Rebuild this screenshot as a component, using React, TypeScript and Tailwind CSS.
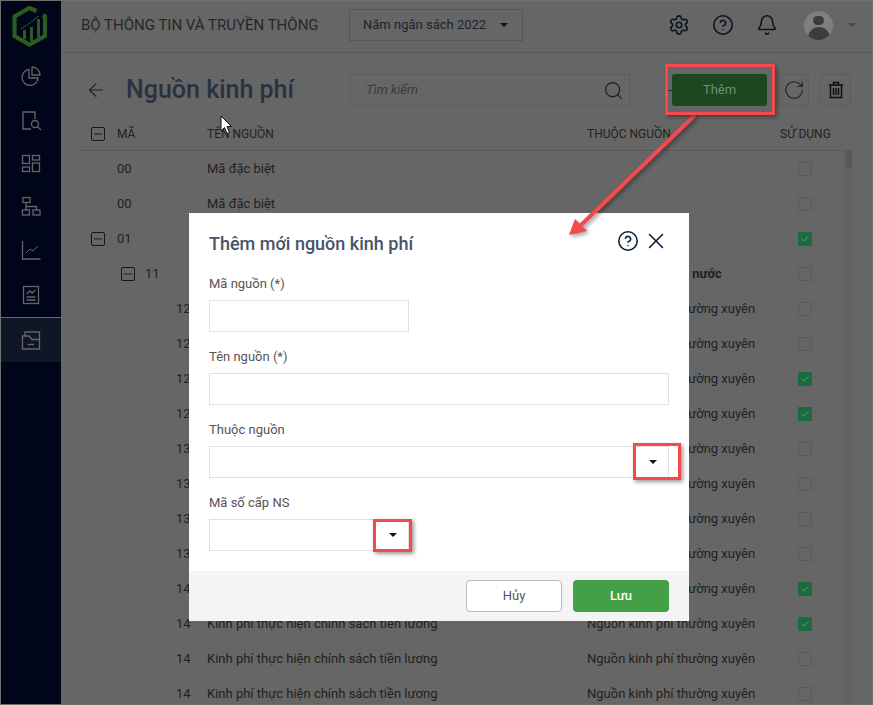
import { Bell, CircleHelp, RotateCw, Search, Settings, X, ArrowLeft, Check } from "lucide-react";

const rows = [
  { ma: "00", level: 0, ten: "Mã đặc biệt", nguon: "", checked: false },
  { ma: "00", level: 0, ten: "Mã đặc biệt", nguon: "", checked: false },
  { ma: "01", level: 0, ten: "", nguon: "", checked: true, tree: true },
  { ma: "11", level: 1, ten: "", nguon: "Ngân sách trong nước", checked: false, tree: true, bold: true },
  { ma: "12", level: 2, ten: "", checked: false },
  { ma: "12", level: 2, ten: "", checked: false },
  { ma: "12", level: 2, ten: "", checked: true },
  { ma: "12", level: 2, ten: "", checked: true },
  { ma: "13", level: 2, ten: "", checked: false },
  { ma: "13", level: 2, ten: "", checked: false },
  { ma: "13", level: 2, ten: "", checked: false },
  { ma: "13", level: 2, ten: "", checked: false },
  { ma: "14", level: 2, ten: "", checked: true },
  { ma: "14", level: 2, checked: true },
  { ma: "14", level: 2, checked: false },
  { ma: "14", level: 2, checked: false },
];

function TreeBox({ className = "" }: { className?: string }) {
  return (
    <div className={`w-[14px] h-[14px] border border-[#14161c] rounded-[2px] flex items-center justify-center ${className}`}>
      <div className="w-[8px] h-[2px] bg-[#3c3f46]"></div>
    </div>
  );
}

function Logo() {
  return (
    <svg width="36" height="41" viewBox="0 0 36 41" fill="none" className="mr-[2px]">
      <path d="M24.5 5 L17.5 2 L2.5 10.5 V30 L17.5 38.5 L33 30 V10.5 L31 9" stroke="#2a5c20" strokeWidth="4.2" />
      <rect x="11" y="24" width="3" height="9" fill="#2a5c20" />
      <rect x="18" y="21" width="3" height="14" fill="#2a5c20" />
      <rect x="25" y="13" width="3" height="20" fill="#2a5c20" />
      <path d="M9 23 L18 17 L27 10" stroke="#2a5c20" strokeWidth="1" />
    </svg>
  );
}

function NavIcon({ children }: { children: React.ReactNode }) {
  return (
    <svg width="22" height="22" viewBox="0 0 22 22" fill="none" stroke="#666666" strokeWidth="1.3">
      {children}
    </svg>
  );
}

function Sidebar() {
  return (
    <aside className="w-[61px] shrink-0 bg-[#00051a] flex flex-col items-center">
      <div className="h-[53px] flex items-center justify-center">
        <Logo />
      </div>
      <div className="flex flex-col items-center w-full mt-[12px]">
        <div className="h-[22px] flex items-center">
          <NavIcon>
            <path d="M9 4.5 A8 8 0 1 0 18 13 H9 Z" />
            <path d="M12 2 A8 8 0 0 1 20 10 H12 Z" />
          </NavIcon>
        </div>
        <div className="h-[22px] mt-[23px] flex items-center">
          <NavIcon>
            <path d="M11 19 H3 V2 H15 V9" />
            <circle cx="15" cy="14" r="3.5" />
            <path d="M17.5 16.5 L21 20" />
          </NavIcon>
        </div>
        <div className="h-[22px] mt-[21px] flex items-center">
          <NavIcon>
            <rect x="2.5" y="2.5" width="7" height="8" />
            <rect x="2.5" y="14" width="7" height="4.5" />
            <rect x="12.5" y="2.5" width="7" height="4.5" />
            <rect x="12.5" y="10" width="7" height="8.5" />
          </NavIcon>
        </div>
        <div className="h-[22px] mt-[21px] flex items-center">
          <NavIcon>
            <rect x="3" y="1.5" width="7" height="5" />
            <rect x="2.5" y="14" width="7" height="5" />
            <rect x="13" y="14" width="7" height="5" />
            <path d="M6 6.5 V14 M6 10.5 H16.5 V14" />
          </NavIcon>
        </div>
        <div className="h-[22px] mt-[21px] flex items-center">
          <NavIcon>
            <path d="M2.5 2 V20 H20.5" />
            <path d="M6 14 L10 10 L13 12 L18 7" strokeWidth="1" />
          </NavIcon>
        </div>
        <div className="h-[22px] mt-[23px] flex items-center">
          <NavIcon>
            <rect x="3.5" y="2.5" width="15" height="17" />
            <path d="M6.5 10 L10 7 L12 9 L15.5 6" />
            <path d="M6.5 13 H15.5 M6.5 16 H15.5" />
          </NavIcon>
        </div>
        <div className="w-full mt-[11px] h-[45px] border-t border-[#6a6a6a] bg-[#0f1626] flex items-center justify-center">
          <NavIcon>
            <path d="M2.5 20 V7 H9 L12 10.5 H19.5 V20 Z" />
            <path d="M5 7 V3 H19.5 V10.5" />
            <path d="M7.5 15.5 H14" />
          </NavIcon>
        </div>
      </div>
    </aside>
  );
}

function Header() {
  return (
    <header className="h-[53px] shrink-0 border-b border-[#5b5b5b] flex items-center pl-[20px] pr-[17px] pb-[2px]">
      <div className="text-[15px] text-[#26262a] whitespace-nowrap w-[268px]">BỘ THÔNG TIN VÀ TRUYỀN THÔNG</div>
      <div className="w-[174px] h-[32px] border border-[#565656] flex items-center pl-[13px] pr-[14px] justify-between">
        <span className="text-[13px] text-[#20222a] whitespace-nowrap">Năm ngân sách 2022</span>
        <div className="w-0 h-0 border-x-[4px] border-x-transparent border-t-[4px] border-t-[#11131c]"></div>
      </div>
      <div className="ml-auto flex items-center">
        <Settings className="w-[22px] h-[22px] text-[#0c1020]" strokeWidth={1.7} />
        <CircleHelp className="w-[22px] h-[22px] text-[#0c1020] ml-[22px]" strokeWidth={1.7} />
        <Bell className="w-[22px] h-[22px] text-[#0c1020] ml-[22px]" strokeWidth={1.7} />
        <div className="w-[29px] h-[29px] rounded-full bg-[#7f7f7f] ml-[26px] overflow-hidden flex flex-col items-center">
          <div className="w-[11px] h-[11px] rounded-full bg-[#3d3d3d] mt-[5px]"></div>
          <div className="w-[22px] h-[14px] rounded-t-full bg-[#3d3d3d] mt-[2px]"></div>
        </div>
        <div className="w-0 h-0 border-x-[4px] border-x-transparent border-t-[4px] border-t-[#4a4a4a] ml-[15px]"></div>
      </div>
    </header>
  );
}

function TrashIcon() {
  return (
    <svg width="16" height="18" viewBox="0 0 16 18" fill="none" stroke="#0c0c10" strokeWidth="1.4">
      <path d="M1 4 H15 M5.5 4 V1.5 H10.5 V4 M2.5 4 V16.5 H13.5 V4" />
      <path d="M5.5 7 V14 M8 7 V14 M10.5 7 V14" />
    </svg>
  );
}

function Toolbar() {
  return (
    <div className="h-[47px] mt-[21px] shrink-0 flex items-start pl-[20px]">
      <ArrowLeft className="w-[22px] h-[22px] ml-[4px] mt-[5px] text-[#20232c]" strokeWidth={1.3} />
      <h1 className="ml-[19px] text-[25px] leading-[32px] font-medium text-[#2a3240] w-[224px] whitespace-nowrap">Nguồn kinh phí</h1>
      <div className="w-[280px] h-[32px] border border-[#5c5c5c] flex items-center justify-between pl-[15px] pr-[5px]">
        <span className="text-[13px] italic text-[#3a3a3a]">Tìm kiếm</span>
        <Search className="w-[21px] h-[21px] text-[#1b1b1f]" strokeWidth={1.2} />
      </div>
      <div className="w-[6px] h-[1px] bg-[#2a2a2a] ml-[36px] mt-[16px]"></div>
      <button className="w-[95px] h-[32px] bg-[#1c4720] rounded-[3px] text-[13px] text-[#6d8f70]">Thêm</button>
      <button className="w-[31px] h-[32px] ml-[11px] border border-[#5c5c5c] rounded-[4px] flex items-center justify-center">
        <RotateCw className="w-[22px] h-[22px] text-[#1b1b1f]" strokeWidth={1.1} />
      </button>
      <button className="w-[31px] h-[32px] ml-[11px] border border-[#5c5c5c] rounded-[4px] flex items-center justify-center">
        <TrashIcon />
      </button>
    </div>
  );
}

function Row({ row }: { row: (typeof rows)[number] }) {
  const ten = row.ten ?? "Kinh phí thực hiện chính sách tiền lương";
  const nguon = row.nguon ?? "Nguồn kinh phí thường xuyên";
  return (
    <div className="h-[35px] flex items-center text-[13px] text-[#221f20]">
      <div className="w-[126px] shrink-0 flex items-center">
        {row.level === 0 && (
          <>
            {row.tree ? <TreeBox className="ml-[10px]" /> : <div className="w-[14px] ml-[10px]"></div>}
            <span className="ml-[12px]">{row.ma}</span>
          </>
        )}
        {row.level === 1 && (
          <>
            <TreeBox className="ml-[40px]" />
            <span className="ml-[10px]">{row.ma}</span>
          </>
        )}
        {row.level === 2 && <span className="ml-[95px]">{row.ma}</span>}
      </div>
      <div className="w-[380px] shrink-0 whitespace-nowrap">{ten}</div>
      <div className={`w-[211px] shrink-0 whitespace-nowrap ${row.bold ? "font-bold pl-[6px]" : ""}`}>{nguon}</div>
      <div className="flex-1 flex">
        <div
          className={`w-[14px] h-[14px] rounded-[1px] flex items-center justify-center ${
            row.checked ? "bg-[#1c6b3d]" : "border border-[#5a5a5a]"
          }`}
        >
          {row.checked && <Check className="w-[10px] h-[10px] text-[#8fb59f]" strokeWidth={1.5} />}
        </div>
      </div>
    </div>
  );
}

function Field({ label, widthClass, arrow }: { label: string; widthClass: string; arrow?: boolean }) {
  return (
    <div className="mb-[14px]">
      <div className="text-[13px] leading-[22px] text-[#555555] mb-[5px]">{label}</div>
      <div className={`h-[32px] border border-[#e0e0e0] flex items-center justify-end ${widthClass}`}>
        {arrow && (
          <div className="w-[31px] h-full flex items-center justify-center">
            <div className="w-0 h-0 border-x-[4px] border-x-transparent border-t-[4px] border-t-[#11131c]"></div>
          </div>
        )}
      </div>
    </div>
  );
}

function Dialog() {
  return (
    <div className="absolute left-[189px] top-[213px] w-[500px] h-[408px] bg-white flex flex-col">
      <div className="flex items-center justify-between pl-[20px] pr-[20px] pt-[15px]">
        <h2 className="text-[18px] leading-[28px] font-medium text-[#47536a]">Thêm mới nguồn kinh phí</h2>
        <div className="flex items-center mb-[6px] gap-[4px]">
          <CircleHelp className="w-[22px] h-[22px] text-[#0c1b3a]" strokeWidth={1.7} />
          <X className="w-[26px] h-[26px] text-[#0c1b3a]" strokeWidth={1.4} />
        </div>
      </div>
      <div className="px-[20px] pt-[13px] flex-1">
        <Field label="Mã nguồn (*)" widthClass="w-[200px]" />
        <Field label="Tên nguồn (*)" widthClass="w-full" />
        <Field label="Thuộc nguồn" widthClass="w-full" arrow />
        <Field label="Mã số cấp NS" widthClass="w-[200px]" arrow />
      </div>
      <div className="h-[50px] bg-[#f4f4f4] flex items-start pt-[9px] justify-end gap-[11px] pr-[20px]">
        <button className="w-[96px] h-[32px] bg-white border border-[#b9b9b9] rounded-[4px] text-[13px] text-[#555555]">Hủy</button>
        <button className="w-[96px] h-[32px] bg-[#43a047] rounded-[4px] text-[13px] font-medium text-white">Lưu</button>
      </div>
    </div>
  );
}

function Annotations() {
  return (
    <>
      <svg className="absolute left-0 top-0 pointer-events-none drop-shadow-[2px_2px_2px_rgba(0,0,0,0.4)]" width="873" height="705" fill="none">
        <path d="M695 115 L579 227" stroke="#f44a4c" strokeWidth="4" />
        <path d="M569 235 L575 219 L587 231 Z" fill="#f44a4c" />
      </svg>
      <div className="absolute left-[665px] top-[64px] w-[110px] h-[51px] border-[3px] border-[#f44a4c] shadow-[2px_2px_4px_rgba(0,0,0,0.4)]"></div>
      <div className="absolute left-[633px] top-[443px] w-[48px] h-[37px] border-[3px] border-[#f44a4c] shadow-[2px_2px_4px_rgba(0,0,0,0.4)]"></div>
      <div className="absolute left-[373px] top-[519px] w-[39px] h-[33px] border-[3px] border-[#f44a4c] shadow-[2px_2px_4px_rgba(0,0,0,0.4)]"></div>
      <svg className="absolute left-[220px] top-[115px]" width="13" height="20" viewBox="0 0 13 20">
        <path d="M1 1 V16 L4.5 12.5 L7 18.5 L9.5 17.5 L7 11.5 H11.5 Z" fill="#ffffff" stroke="#111111" strokeWidth="1" />
      </svg>
      <div className="absolute inset-0 border border-[#6f6f6f] pointer-events-none"></div>
    </>
  );
}

export default function App() {
  return (
    <div className="relative w-[873px] h-[705px] overflow-hidden flex bg-[#666666] font-['Roboto',sans-serif]">
      <Sidebar />
      <main className="flex-1 min-w-0 flex flex-col">
        <Header />
        <Toolbar />
        <div className="ml-[20px] mr-[21px] flex-1 min-h-0 overflow-hidden">
          <div className="h-[30px] flex items-start pt-[5px] text-[12px] leading-[16px] text-[#221f20] border-b border-[#595959]">
            <div className="w-[126px] flex items-center">
              <TreeBox className="ml-[10px]" />
              <span className="ml-[12px]">MÃ</span>
            </div>
            <div className="w-[380px]">TÊN NGUỒN</div>
            <div className="w-[193px]">THUỘC NGUỒN</div>
            <div className="flex-1">SỬ DỤNG</div>
          </div>
          <div className="relative">
            <div className="absolute right-0 top-0 w-[7px] h-[600px] bg-[#626262]">
              <div className="w-[7px] h-[17px] bg-[#595959]"></div>
            </div>
            {rows.map((row, i) => (
              <Row key={i} row={row} />
            ))}
          </div>
        </div>
      </main>
      <Dialog />
      <Annotations />
    </div>
  );
}
